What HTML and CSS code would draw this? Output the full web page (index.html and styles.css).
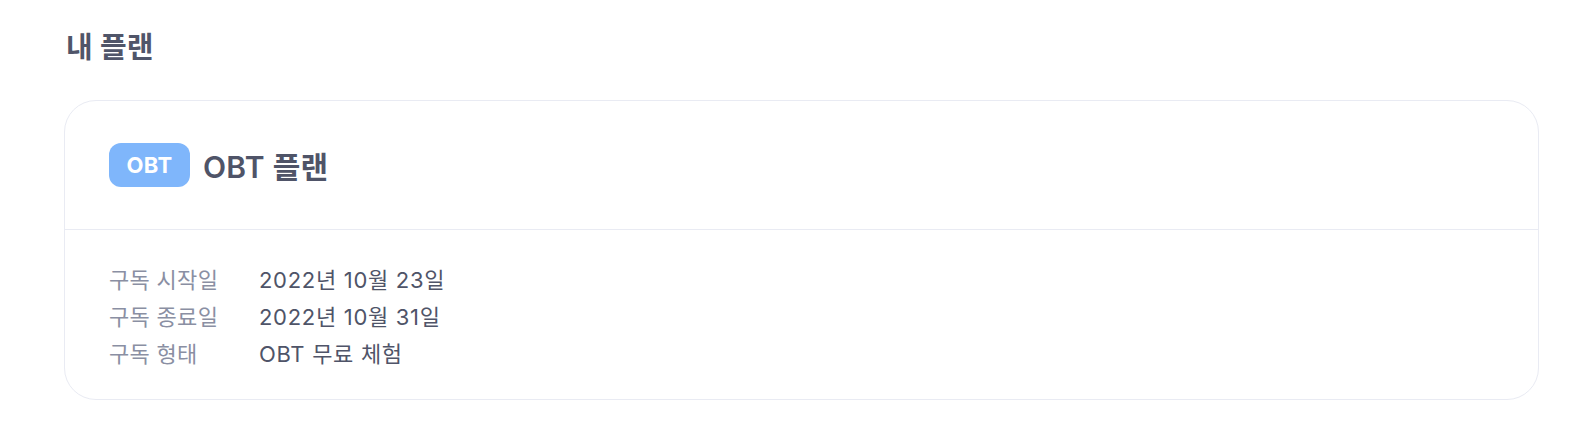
FILE: index.html
```html
<!DOCTYPE html>
<html lang="ko">
<head>
<meta charset="utf-8">
<title>내 플랜</title>
<link rel="stylesheet" href="styles.css">
</head>
<body>
<main class="page">
  <h2 class="section-title">내 플랜</h2>
  <section class="plan-card">
    <div class="plan-head">
      <span class="badge">OBT</span>
      <span class="plan-name">OBT 플랜</span>
    </div>
    <dl class="plan-info">
      <div class="row"><dt>구독 시작일</dt><dd>2022년 10월 23일</dd></div>
      <div class="row"><dt>구독 종료일</dt><dd>2022년 10월 31일</dd></div>
      <div class="row"><dt>구독 형태</dt><dd>OBT 무료 체험</dd></div>
    </dl>
  </section>
</main>
</body>
</html>
```

FILE: styles.css
```css
* { box-sizing: border-box; }
html, body { margin: 0; padding: 0; background: #ffffff; }
body {
  font-family: Inter, "Noto Sans CJK KR", sans-serif;
  color: #4f5468;
}
.page {
  padding: 30px 53px 0 64px;
}
.section-title {
  margin: 0 0 34px 2px;
  font-size: 29px;
  line-height: 36px;
  font-weight: 600;
  color: #505569;
}
.plan-card {
  border: 1.5px solid #e9ebf3;
  border-radius: 32px;
  background: #fff;
}
.plan-head {
  display: flex;
  align-items: center;
  gap: 13px;
  height: 129px;
  padding: 0 44px;
  border-bottom: 1.5px solid #e9ebf3;
}
.badge {
  display: inline-flex;
  align-items: center;
  justify-content: center;
  width: 81px;
  height: 44px;
  border-radius: 12px;
  background: #7fb6fb;
  color: #fff;
  font-size: 22px;
  font-weight: 700;
  letter-spacing: 0.4px;
}
.plan-name {
  font-size: 30px;
  font-weight: 600;
  color: #4f5468;
  letter-spacing: 0.3px;
}
.plan-info {
  margin: 0;
  padding: 32px 44px 26px;
}
.row {
  display: flex;
  font-size: 22px;
  line-height: 37px;
}
.row dt {
  width: 150px;
  color: #8a8fa3;
  letter-spacing: 0.3px;
}
.row dd {
  margin: 0;
  color: #4f5468;
  letter-spacing: 0.7px;
}
```
